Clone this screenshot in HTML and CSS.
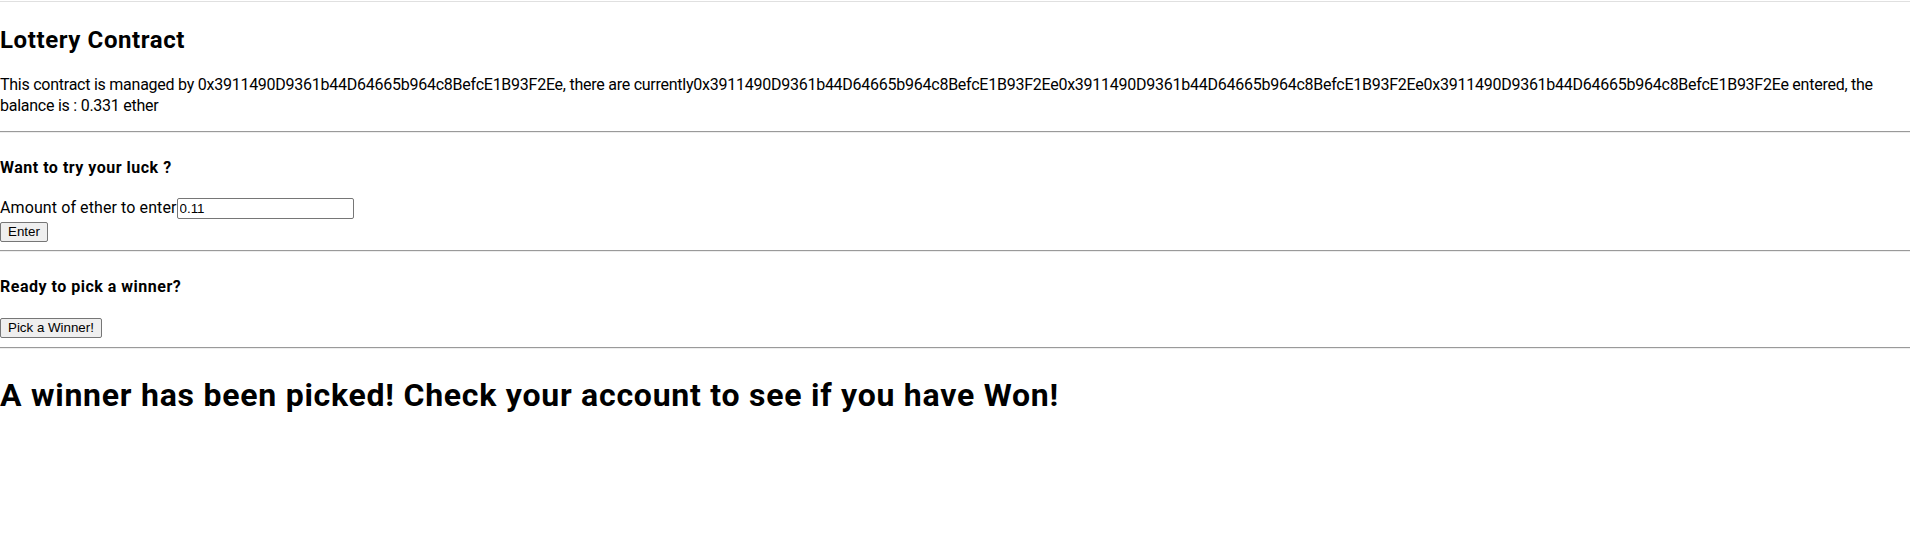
FILE: index.html
```html
<!DOCTYPE html>
<html lang="en">
<head>
<meta charset="utf-8">
<title>Lottery Contract</title>
<link rel="stylesheet" href="styles.css">
</head>
<body>
<div class="topline"></div>
<div class="app">
  <h2 class="title">Lottery Contract</h2>
  <p class="info">This contract is managed by 0x3911490D9361b44D64665b964c8BefcE1B93F2Ee, there are currently0x3911490D9361b44D64665b964c8BefcE1B93F2Ee0x3911490D9361b44D64665b964c8BefcE1B93F2Ee0x3911490D9361b44D64665b964c8BefcE1B93F2Ee entered, the balance is : 0.331 ether</p>
  <hr class="rule">
  <form class="enter-form">
    <h4 class="subhead">Want to try your luck ?</h4>
    <div class="field"><label class="label">Amount of ether to enter</label><input class="amount" type="text" value="0.11"></div>
    <button class="btn btn-enter" type="button">Enter</button>
  </form>
  <hr class="rule">
  <h4 class="subhead">Ready to pick a winner?</h4>
  <button class="btn btn-pick" type="button">Pick a Winner!</button>
  <hr class="rule">
  <h1 class="message">A winner has been picked! Check your account to see if you have Won!</h1>
</div>
</body>
</html>
```
FILE: styles.css
```css
html, body {
  margin: 0;
  padding: 0;
  background: #ffffff;
}

body {
  font-family: "Segoe UI", Roboto, "Liberation Sans", sans-serif;
  color: #000000;
  font-size: 16px;
}

.topline {
  height: 1px;
  margin-top: 1px;
  background: #e0e0e0;
}

.app {
  display: flex;
  flex-direction: column;
  align-items: flex-start;
}

.title {
  font-size: 24px;
  font-weight: 700;
  line-height: 32px;
  margin: 22px 0 0 0;
  letter-spacing: 0.6px;
}

.info {
  font-size: 16px;
  line-height: 20.5px;
  margin: 19px 0 0 0;
  width: 100%;
  letter-spacing: -0.25px;
}

.rule {
  align-self: stretch;
  border: none;
  border-top: 1px solid #9a9a9a;
  border-bottom: 1px solid #eeeeee;
  height: 0;
  margin: 15px 0 0 0;
}

.enter-form {
  display: flex;
  flex-direction: column;
  align-items: flex-start;
  margin: 0;
}

.subhead {
  font-size: 16px;
  font-weight: 700;
  line-height: 21px;
  margin: 24px 0 0 0;
  letter-spacing: 0.5px;
}

.field {
  display: flex;
  align-items: flex-start;
  height: 24px;
  margin-top: 19px;
}

.label {
  line-height: 21px;
  font-size: 16px;
  letter-spacing: 0.1px;
}

.amount {
  box-sizing: border-box;
  width: 177px;
  height: 21px;
  margin: 1px 0 0 0;
  padding: 1px 2px;
  border: 1px solid #767676;
  border-radius: 2px;
  font-family: "Liberation Sans", Arial, sans-serif;
  font-size: 13.33px;
  color: #000;
  background: #fff;
}

.btn {
  box-sizing: border-box;
  height: 20px;
  padding: 0 7px;
  border: 1px solid #767676;
  border-radius: 2px;
  background: #efefef;
  font-family: "Liberation Sans", Arial, sans-serif;
  font-size: 13.33px;
  line-height: 18px;
  color: #000;
}

.btn-enter {
  margin-top: 1px;
}

.btn-pick {
  margin-top: 21px;
}

.enter-form + .rule {
  margin-top: 8px;
}

.btn-pick + .rule {
  margin-top: 9px;
}

.message {
  font-size: 32px;
  font-weight: 700;
  line-height: 42px;
  margin: 25px 0 0 0;
  letter-spacing: 0.75px;
}
```
